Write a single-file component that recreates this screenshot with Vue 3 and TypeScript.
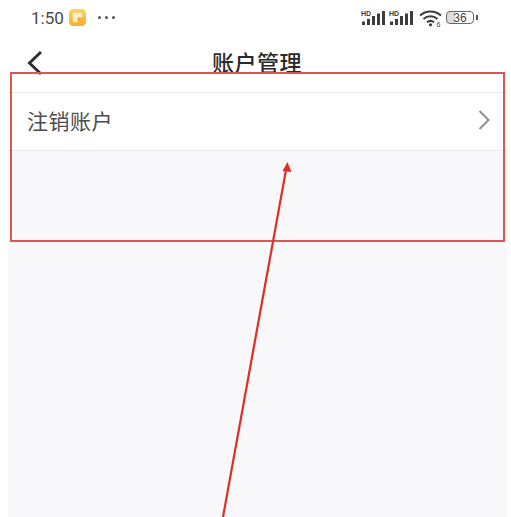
<script setup lang="ts">
const title = '账户管理'
const rowLabel = '注销账户'
</script>

<template>
  <div class="page">
    <header class="status">
      <div class="status-left">
        <span class="time">1:50</span>
        <svg class="app-icon" width="17" height="17" viewBox="0 0 16 16">
          <defs>
            <linearGradient id="g" x1="0" y1="0" x2="0" y2="1">
              <stop offset="0" stop-color="#fbd267" />
              <stop offset="1" stop-color="#f6ad2f" />
            </linearGradient>
          </defs>
          <rect width="16" height="16" rx="4" fill="url(#g)" />
          <path d="M3.500 3.500H12.500V8L8 12.500H3.500Z" fill="#fdf0c8" />
          <path d="M8 12.500V8H12.500Z" fill="#f3a524" />
        </svg>
        <span class="dots"><i></i><i></i><i></i></span>
      </div>
      <div class="status-right">
        <svg width="25" height="16" viewBox="0 0 25 16" class="sig">
          <text x="0" y="6" class="hd">HD</text>
          <g fill="#3c3c3c">
            <rect x="1" y="11.500" width="3" height="3.500" />
            <rect x="6" y="9" width="3" height="6" />
            <rect x="11" y="6" width="3" height="9" />
            <rect x="16" y="3.500" width="3" height="11.500" />
            <rect x="21" y="1" width="3" height="14" />
          </g>
        </svg>
        <svg width="25" height="16" viewBox="0 0 25 16" class="sig">
          <text x="0" y="6" class="hd">HD</text>
          <g fill="#3c3c3c">
            <rect x="1" y="11.500" width="3" height="3.500" />
            <rect x="6" y="9" width="3" height="6" />
            <rect x="11" y="6" width="3" height="9" />
            <rect x="16" y="3.500" width="3" height="11.500" />
            <rect x="21" y="1" width="3" height="14" />
          </g>
        </svg>
        <svg class="wifi" width="23" height="18" viewBox="0 0 23 18" fill="none" stroke="#3c3c3c" stroke-width="2">
          <path d="M1 6.500C6.800 1 16.200 1 22 6.500" />
          <path d="M4.500 10C8.500 6.400 14.500 6.400 18.500 10" />
          <path d="M8 13.300C10 11.700 13 11.700 15 13.300" />
          <circle cx="11.500" cy="15.800" r="1.600" fill="#3c3c3c" stroke="none" />
          <text x="17.500" y="17.800" class="wifi6">6</text>
        </svg>
        <div class="battery">
          <div class="battery-body"><span>36</span></div>
          <div class="battery-cap"></div>
        </div>
      </div>
    </header>

    <nav class="nav">
      <svg class="back" width="18" height="26" viewBox="0 0 18 26" fill="none">
        <path d="M15 2L3.500 13L15 24" stroke="#2e2e2e" stroke-width="3" />
      </svg>
      <h1 class="title">{{ title }}</h1>
    </nav>

    <main class="content">
      <div class="row">
        <span class="row-label">{{ rowLabel }}</span>
        <svg width="12" height="20" viewBox="0 0 12 20" fill="none">
          <path d="M1.500 1L10.500 10L1.500 19" stroke="#8e8e8e" stroke-width="2" />
        </svg>
      </div>
    </main>

    <div class="mark-box"></div>
    <svg class="arrow" width="511" height="517" viewBox="0 0 511 517" fill="none">
      <path d="M223 517L286 170" stroke="#dc2f26" stroke-width="2.200" />
      <path d="M287.500 162L291.500 172L282.500 171Z" fill="#dc2f26" />
    </svg>
  </div>
</template>

<style scoped>
.page {
  position: relative;
  width: 511px;
  height: 517px;
  overflow: hidden;
  background: #fff;
  font-family: "Noto Sans CJK SC", "Liberation Sans", sans-serif;
  display: flex;
  flex-direction: column;
}
.status {
  height: 35px;
  flex: none;
  padding: 0 33px 0 31px;
  display: flex;
  align-items: center;
  justify-content: space-between;
}
.status-left {
  display: flex;
  align-items: center;
}
.time {
  font-family: "Roboto", "Liberation Sans", sans-serif;
  font-size: 17px;
  color: #4a4a4a;
  width: 38px;
}
.app-icon {
  flex: none;
}
.dots {
  display: flex;
  gap: 4px;
  margin-left: 12px;
}
.dots i {
  width: 3px;
  height: 3px;
  border-radius: 50%;
  background: #555;
}
.status-right {
  display: flex;
  align-items: center;
}
.sig {
  margin-right: 3px;
}
.hd {
  font-family: "Liberation Sans", sans-serif;
  font-size: 7px;
  font-weight: 700;
  fill: #3c3c3c;
}
.wifi {
  margin: 0 4px 0 2px;
}
.wifi6 {
  font-family: "Liberation Sans", sans-serif;
  font-size: 7px;
  fill: #3c3c3c;
  stroke: none;
}
.battery {
  display: flex;
  align-items: center;
}
.battery-body {
  width: 28px;
  height: 13px;
  box-sizing: border-box;
  border: 1.500px solid #666;
  border-radius: 4px;
  display: flex;
  align-items: center;
  justify-content: center;
  background: linear-gradient(90deg, #dedede 0 30%, #fff 30%);
}
.battery-body span {
  font-family: "Liberation Sans", sans-serif;
  font-size: 12px;
  color: #444;
}
.battery-cap {
  width: 2px;
  height: 5px;
  margin-left: 2px;
  background: #555;
}
.nav {
  position: relative;
  height: 57px;
  flex: none;
  display: flex;
  align-items: center;
  justify-content: center;
}
.back {
  position: absolute;
  left: 26px;
  top: 15px;
}
.title {
  margin: -6px 0 0 3px;
  font-size: 22px;
  font-weight: 500;
  color: #2a2a2a;
  letter-spacing: 0.500px;
}
.content {
  flex: 1;
  background: #f8f8fa;
  margin-left: 8px;
  margin-right: 4px;
  border-top: 1px solid #e8e8ea;
}
.row {
  height: 58px;
  box-sizing: border-box;
  background: #fff;
  border-bottom: 1px solid #e8e8ea;
  display: flex;
  align-items: center;
  justify-content: space-between;
  padding: 0 17px 3px 19px;
}
.row-label {
  font-size: 21px;
  color: #4c4c4c;
  letter-spacing: 0.500px;
}
.mark-box {
  position: absolute;
  left: 10px;
  top: 72px;
  width: 495px;
  height: 170px;
  box-sizing: border-box;
  border: 2px solid #dc5650;
}
.arrow {
  position: absolute;
  left: 0;
  top: 0;
}
</style>
